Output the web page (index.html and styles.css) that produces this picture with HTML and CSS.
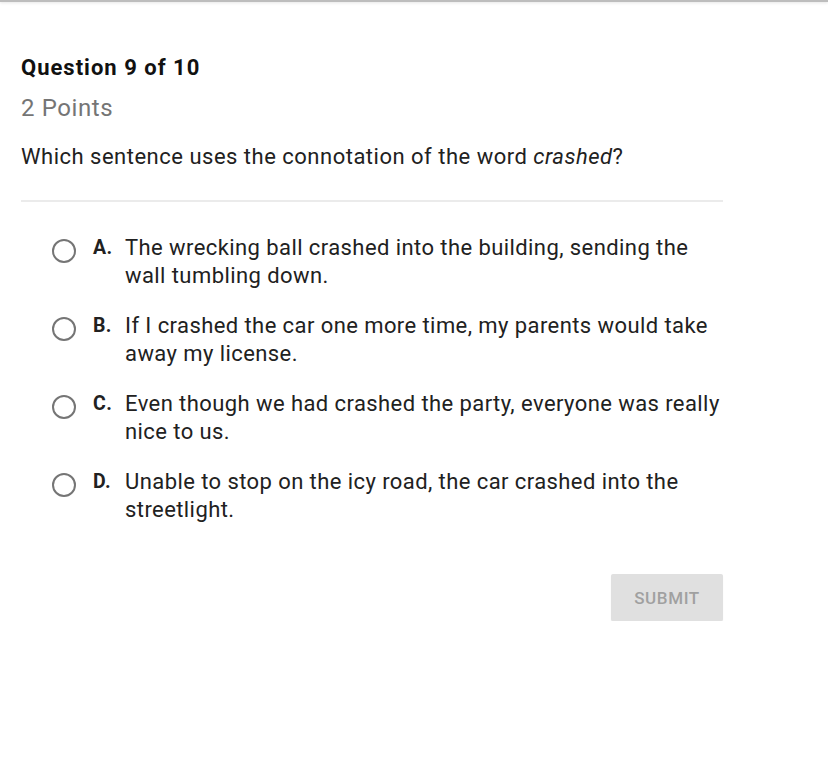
FILE: index.html
```html
<!DOCTYPE html>
<html>
<head>
<meta charset="utf-8">
<link rel="stylesheet" href="styles.css">
</head>
<body>
<div class="topbar"></div>
<main class="quiz">
  <div class="q-number">Question 9 of 10</div>
  <div class="q-points">2 Points</div>
  <div class="q-text">Which sentence uses the connotation of the word <em>crashed</em>?</div>
  <hr class="divider">
  <ul class="options">
    <li class="option"><span class="radio"></span><span class="letter">A.</span><span class="otext">The wrecking ball crashed into the building, sending the wall tumbling down.</span></li>
    <li class="option"><span class="radio"></span><span class="letter">B.</span><span class="otext">If I crashed the car one more time, my parents would take away my license.</span></li>
    <li class="option"><span class="radio"></span><span class="letter">C.</span><span class="otext">Even though we had crashed the party, everyone was really nice to us.</span></li>
    <li class="option"><span class="radio"></span><span class="letter">D.</span><span class="otext">Unable to stop on the icy road, the car crashed into the streetlight.</span></li>
  </ul>
  <div class="actions"><button class="submit">SUBMIT</button></div>
</main>
</body>
</html>
```
FILE: styles.css
```css
html, body {
  margin: 0;
  padding: 0;
  background: #ffffff;
}
body {
  font-family: Roboto, "Liberation Sans", sans-serif;
  color: #212121;
}
.topbar {
  height: 2px;
  background: #bdbdbd;
  box-shadow: 0 1px 3px rgba(0,0,0,0.12);
}
.quiz {
  width: 702px;
  padding: 51.5px 0 0 21px;
}
.q-number {
  font-size: 22px;
  font-weight: 700;
  line-height: 28px;
  letter-spacing: 1px;
  color: #111;
}
.q-points {
  margin-top: 12px;
  font-size: 24px;
  line-height: 28px;
  letter-spacing: 0.6px;
  color: #757575;
}
.q-text {
  margin-top: 21px;
  font-size: 22px;
  line-height: 28px;
  letter-spacing: 0.5px;
  color: #212121;
}
.divider {
  margin: 29.5px 0 0 0;
  border: 0;
  height: 2px;
  background: #ebebeb;
}
.options {
  list-style: none;
  margin: 31.5px 0 0 0;
  padding: 0;
  display: flex;
  flex-direction: column;
  gap: 22px;
}
.option {
  display: flex;
  align-items: flex-start;
  font-size: 22px;
  line-height: 28px;
  letter-spacing: 0.42px;
  color: #212121;
}
.radio {
  flex: none;
  box-sizing: border-box;
  width: 24px;
  height: 24px;
  border: 2px solid #757575;
  border-radius: 50%;
  margin: 5px 0 0 31px;
}
.letter {
  flex: none;
  width: 32px;
  margin-left: 17px;
  font-weight: 700;
  font-size: 19.5px;
}
.otext {
  flex: 1;
}
.actions {
  display: flex;
  justify-content: flex-end;
  margin-top: 50.5px;
}
.submit {
  width: 112px;
  height: 47px;
  border: 0;
  border-radius: 2px;
  background: #e0e0e0;
  color: #a0a0a0;
  font-family: Roboto, "Liberation Sans", sans-serif;
  font-size: 17px;
  font-weight: 500;
  letter-spacing: 0.6px;
  box-shadow: 0 1px 1px rgba(0,0,0,0.08);
}
```
